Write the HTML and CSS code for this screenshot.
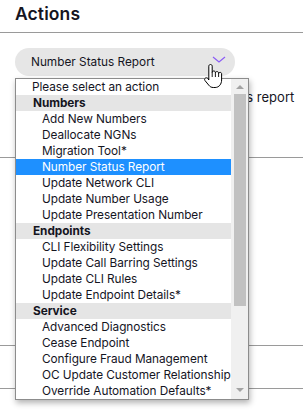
FILE: index.html
```html
<!DOCTYPE html>
<html lang="en">
<head>
  <meta charset="utf-8">
  <meta name="viewport" content="width=device-width,initial-scale=1">
  <title>Actions</title>
  <link rel="stylesheet" href="styles.css">
</head>
<body>

  <header class="page-header">
    <h1>Actions</h1>
  </header>

  <section class="block block-first">
    <div class="select-pill">
      <span>Number Status Report</span>
      <svg class="chevron" width="14" height="8" viewBox="0 0 14 8"><polyline points="1,1 7,6 13,1" fill="none" stroke="#8b5cf6" stroke-width="1.2"/></svg>
    </div>
    <p class="hint">Generates a customer's number status report</p>
  </section>
  <section class="block block-second"></section>
  <section class="block block-third"></section>

  <!-- open list of the select, drawn over the page -->
  <div class="dropdown">
    <ul class="options">
      <li class="placeholder">Please select an action</li>
      <li class="group">Numbers</li>
      <li>Add New Numbers</li>
      <li>Deallocate NGNs</li>
      <li>Migration Tool*</li>
      <li class="selected">Number Status Report</li>
      <li>Update Network CLI</li>
      <li>Update Number Usage</li>
      <li>Update Presentation Number</li>
      <li class="group">Endpoints</li>
      <li>CLI Flexibility Settings</li>
      <li>Update Call Barring Settings</li>
      <li>Update CLI Rules</li>
      <li>Update Endpoint Details*</li>
      <li class="group">Service</li>
      <li>Advanced Diagnostics</li>
      <li>Cease Endpoint</li>
      <li>Configure Fraud Management</li>
      <li>OC Update Customer Relationship</li>
      <li>Override Automation Defaults*</li>
    </ul>
    <div class="scrollbar">
      <span class="arrow arrow-up"></span>
      <span class="thumb"></span>
      <span class="arrow arrow-down"></span>
    </div>
  </div>

  <svg class="cursor" width="20" height="25" viewBox="0 0 20 25">
    <path d="M6.5 0.5c1 0 1.7 .7 1.7 1.7V8.6c0-1 .7-1.6 1.6-1.6s1.6 .6 1.6 1.6v.5c0-1 .7-1.5 1.6-1.5s1.6 .5 1.6 1.5v.7c0-.9 .7-1.4 1.5-1.4s1.5 .5 1.5 1.4V16c0 4-2.5 7.5-6.5 7.5H9.3c-2 0-3.3-.8-4.5-2.3L1 16.6c-.7-1-.4-2 .4-2.5s1.9-.3 2.6 .5L4.8 16V2.2C4.8 1.2 5.5 .5 6.5 .5z" fill="#fff" stroke="#000" stroke-width="1"/>
    <path d="M8.2 8.6v4.4M11.4 9.1v3.9M14.6 9.8v3.2" stroke="#000" stroke-width="0.9" fill="none"/>
  </svg>

</body>
</html>
```

FILE: styles.css
```css
:root {
  --text:        #15151f;
  --line:        #9a9a9a;
  --pill:        #e6e6e6;
  --group-bg:    #e5e5e5;
  --highlight:   #1e90ff;
  --track:       #f0f0f0;
  --thumb:       #c1c1c1;
}
* { margin:0; padding:0; box-sizing:border-box; }
body {
  font-family:Inter,"Noto Sans",sans-serif;
  color:var(--text);
  background:#fff;
  width:303px;
  height:417px;
  overflow:hidden;
  position:relative;
}
.page-header {
  height:33px;
  padding:3px 15px 0;
  border-bottom:1px solid var(--line);
}
.page-header h1 {
  font-size:17.5px;
  font-weight:600;
  line-height:22px;
  letter-spacing:0.1px;
}
.block { border-bottom:1px solid var(--line); }
.block-first { height:125px; padding:15px 15px 0; }
.block-second { height:188px; }
.block-third { height:43px; }
.select-pill {
  display:flex; align-items:center; justify-content:space-between;
  width:220px; height:28px;
  padding:0 9px 0 16px;
  border-radius:14px;
  background:var(--pill);
  font-size:11.8px;
}
.chevron { margin-top:-4px; }
.hint {
  margin-top:13px;
  font-size:13px;
  white-space:nowrap;
}

/* list of the open select */
.dropdown {
  position:absolute; left:15px; top:78px;
  width:234px; height:322px;
  display:flex;
  border:1px solid #8c8c8c;
  background:#fff;
  box-shadow:1px 3px 6px rgba(0,0,0,0.3);
}
.options { list-style:none; width:215px; overflow:hidden; }
.options li {
  height:16px; line-height:16px;
  font-size:11.8px;
  letter-spacing:-0.05px;
  padding-left:26px;
  white-space:nowrap;
}
.options li.placeholder { padding-left:16px; }
.options li.group {
  padding-left:17px;
  font-weight:700;
  background:var(--group-bg);
}
.options li.selected { background:var(--highlight); color:#fff; }
.scrollbar {
  width:17px;
  background:var(--track);
  display:flex; flex-direction:column; align-items:center;
}
.arrow {
  width:0; height:0; margin:6px 0 5px;
  border-left:4px solid transparent;
  border-right:4px solid transparent;
}
.arrow-up { border-bottom:4px solid #a3a3a3; }
.arrow-down { border-top:4px solid #a3a3a3; margin-top:auto; margin-bottom:7px; }
.thumb {
  width:12px; height:212px;
  background:var(--thumb);
}
.cursor { position:absolute; left:204px; top:64px; }
```
